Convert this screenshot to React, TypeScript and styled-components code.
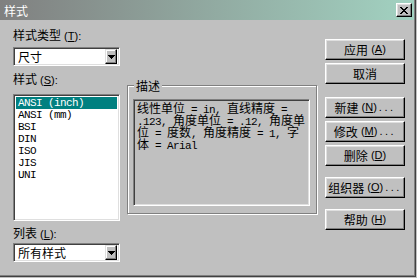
import React from 'react';
import styled, { createGlobalStyle } from 'styled-components';

const Global = createGlobalStyle`
  html, body { margin: 0; padding: 0; background: #c0c0c0; }
  body { width: 417px; height: 278px; overflow: hidden; }
`;

const Window = styled.div`
  width: 416px;
  height: 277px;
  box-sizing: border-box;
  background: #c0c0c0;
  border-right: 1px solid #404040;
  border-bottom: 1px solid #404040;
  box-shadow: inset -1px -1px 0 #808080;
  display: flex;
  flex-direction: column;
  font-family: "Liberation Sans", "Noto Sans CJK SC", sans-serif;
  font-size: 11px;
  color: #000;
`;

const TitleBar = styled.div`
  height: 20px;
  margin-right: 1px;
  box-sizing: border-box;
  display: flex;
  align-items: center;
  justify-content: space-between;
  padding: 0 2px 0 4px;
  background: linear-gradient(90deg, #808080 0%, #a2d2c1 100%);
  color: #fff;
`;

const TitleText = styled.span`
  font-family: "Noto Sans CJK SC", sans-serif;
  font-size: 12px;
  line-height: 13px;
`;

const CloseButton = styled.div`
  width: 16px;
  height: 14px;
  box-sizing: border-box;
  background: #c0c0c0;
  border: 1px solid;
  border-color: #fff #000 #000 #fff;
  box-shadow: inset -1px -1px 0 #808080, inset 1px 1px 0 #dfdfdf;
  display: flex;
  align-items: center;
  justify-content: center;
`;

const Body = styled.div`
  flex: 1;
  display: flex;
  padding-left: 13px;
`;

const LeftCol = styled.div`
  width: 107px;
  display: flex;
  flex-direction: column;
  padding-top: 8px;
`;

const Label = styled.div<{ $gap?: number }>`
  height: 13px;
  line-height: 13px;
  margin-top: ${(p) => p.$gap ?? 0}px;
  white-space: pre;
`;

const Han = styled.span`
  font-family: "Noto Sans CJK SC", sans-serif;
  font-size: 12px;
  letter-spacing: 0;
`;

const Key = styled.span`
  text-decoration: underline;
  text-underline-offset: 1px;
`;

const Sunken = styled.div`
  box-sizing: border-box;
  border: 1px solid;
  border-color: #808080 #fff #fff #808080;
  box-shadow: inset 1px 1px 0 #404040, inset -1px -1px 0 #dfdfdf;
`;

const Combo = styled(Sunken)<{ $gap: number }>`
  margin-top: ${(p) => p.$gap}px;
  height: 19px;
  background: #fff;
  display: flex;
  align-items: center;
  padding: 2px 2px 2px 4px;
`;

const ComboText = styled.div`
  flex: 1;
  font-family: "Noto Sans CJK SC", sans-serif;
  font-size: 12px;
  line-height: 13px;
`;

const DropButton = styled.div`
  width: 12px;
  height: 15px;
  box-sizing: border-box;
  background: #c0c0c0;
  border: 1px solid;
  border-color: #dfdfdf #000 #000 #dfdfdf;
  box-shadow: inset -1px -1px 0 #808080, inset 1px 1px 0 #fff;
  display: flex;
  align-items: center;
  justify-content: center;
`;

const ListBox = styled(Sunken)`
  margin-top: 9px;
  height: 127px;
  background: #fff;
  padding: 2px;
  font-family: "Liberation Mono", monospace;
  font-size: 11px;
  letter-spacing: -0.6px;
`;

const ListItem = styled.div<{ $selected?: boolean }>`
  height: 12px;
  line-height: 12px;
  padding-left: 2px;
  white-space: pre;
  background: ${(p) => (p.$selected ? '#008080' : 'transparent')};
  color: ${(p) => (p.$selected ? '#fff' : '#000')};
`;

const Middle = styled.div`
  margin-left: 7px;
  padding-top: 65px;
`;

const GroupBox = styled.div`
  position: relative;
  width: 190px;
  height: 129px;
  box-sizing: border-box;
  border: 1px solid #808080;
  box-shadow: 1px 1px 0 #fff, inset 1px 1px 0 #fff;
  padding: 13px 6px 0 5px;
`;

const Caption = styled.div`
  position: absolute;
  top: -7px;
  left: 6px;
  padding: 0 2px;
  background: #c0c0c0;
  line-height: 13px;
`;

const DescBox = styled(Sunken)`
  height: 107px;
  background: #c0c0c0;
  padding: 2px 3px;
  font-family: "Liberation Mono", monospace;
  font-size: 11px;
  letter-spacing: -0.6px;
`;

const DescLine = styled.div`
  height: 12px;
  line-height: 12px;
  white-space: pre;
`;

const RightCol = styled.div`
  margin-left: 8px;
  padding-top: 19px;
  display: flex;
  flex-direction: column;
`;

const Button = styled.div<{ $gap: number }>`
  width: 80px;
  height: 21px;
  margin-top: ${(p) => p.$gap}px;
  box-sizing: border-box;
  border: 1px solid;
  border-color: #fff #000 #000 #fff;
  box-shadow: inset -1px -1px 0 #808080, inset 1px 1px 0 #dfdfdf;
  display: flex;
  align-items: center;
  justify-content: center;
  line-height: 13px;
  white-space: pre;
`;

const Dots = styled.span`
  letter-spacing: 2.5px;
  margin-left: 2px;
`;

const CJK = /([\u2E80-\u9FFF\uFF00-\uFFEF]+)/;

function Mixed({ text }: { text: string }) {
  return (
    <>
      {text.split(CJK).map((part, i) =>
        i % 2 === 1 ? <Han key={i}>{part}</Han> : <React.Fragment key={i}>{part}</React.Fragment>
      )}
    </>
  );
}

function Accel({ before, k, after = ')', dots }: { before: string; k: string; after?: string; dots?: boolean }) {
  return (
    <>
      <Mixed text={before} />
      <Key>{k}</Key>
      {after}
      {dots && <Dots>...</Dots>}
    </>
  );
}

function Arrow() {
  return (
    <svg width="7" height="4" viewBox="0 0 7 4" shapeRendering="crispEdges">
      <path d="M0 0h7v1H0zM1 1h5v1H1zM2 2h3v1H2zM3 3h1v1H3z" fill="#000" />
    </svg>
  );
}

function CloseGlyph() {
  return (
    <svg width="8" height="7" viewBox="0 0 8 7" shapeRendering="crispEdges">
      <path
        d="M0 0h2v1H0zM6 0h2v1H6zM1 1h2v1H1zM5 1h2v1H5zM2 2h4v1H2zM3 3h2v1H3zM2 4h4v1H2zM1 5h2v1H1zM5 5h2v1H5zM0 6h2v1H0zM6 6h2v1H6z"
        fill="#000"
      />
    </svg>
  );
}

const styles = ['ANSI (inch)', 'ANSI (mm)', 'BSI', 'DIN', 'ISO', 'JIS', 'UNI'];

const desc = [
  '线性单位 = in, 直线精度 =',
  '.123, 角度单位 = .12, 角度单',
  '位 = 度数, 角度精度 = 1, 字',
  '体 = Arial',
];

export default function App() {
  return (
    <>
      <Global />
      <Window>
        <TitleBar>
          <TitleText>样式</TitleText>
          <CloseButton>
            <CloseGlyph />
          </CloseButton>
        </TitleBar>
        <Body>
          <LeftCol>
            <Label>
              <Accel before="样式类型 (" k="T" after="):" />
            </Label>
            <Combo $gap={6}>
              <ComboText>尺寸</ComboText>
              <DropButton>
                <Arrow />
              </DropButton>
            </Combo>
            <Label $gap={6}>
              <Accel before="样式 (" k="S" after="):" />
            </Label>
            <ListBox>
              {styles.map((s, i) => (
                <ListItem key={s} $selected={i === 0}>
                  {s}
                </ListItem>
              ))}
            </ListBox>
            <Label $gap={5}>
              <Accel before="列表 (" k="L" after="):" />
            </Label>
            <Combo $gap={4}>
              <ComboText>所有样式</ComboText>
              <DropButton>
                <Arrow />
              </DropButton>
            </Combo>
          </LeftCol>
          <Middle>
            <GroupBox>
              <Caption>
                <Han>描述</Han>
              </Caption>
              <DescBox>
                {desc.map((line) => (
                  <DescLine key={line}>
                    <Mixed text={line} />
                  </DescLine>
                ))}
              </DescBox>
            </GroupBox>
          </Middle>
          <RightCol>
            <Button $gap={0}>
              <Accel before="应用 (" k="A" />
            </Button>
            <Button $gap={3}>
              <Han>取消</Han>
            </Button>
            <Button $gap={13}>
              <Accel before="新建 (" k="N" dots />
            </Button>
            <Button $gap={3}>
              <Accel before="修改 (" k="M" dots />
            </Button>
            <Button $gap={3}>
              <Accel before="删除 (" k="D" />
            </Button>
            <Button $gap={11}>
              <Accel before="组织器 (" k="O" dots />
            </Button>
            <Button $gap={11}>
              <Accel before="帮助 (" k="H" />
            </Button>
          </RightCol>
        </Body>
      </Window>
    </>
  );
}
